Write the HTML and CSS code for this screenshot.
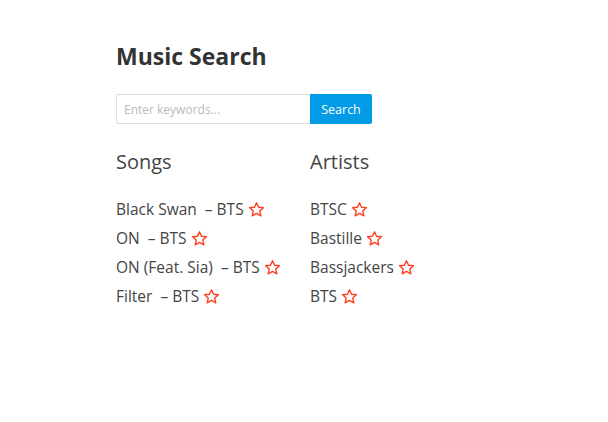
FILE: index.html
```html
<!DOCTYPE html>
<html>
<head>
<meta charset="utf-8">
<link rel="stylesheet" href="styles.css">
</head>
<body>
<main class="page">
  <h1 class="title">Music Search</h1>
  <form class="search">
    <input class="search-input" type="text" placeholder="Enter keywords...">
    <button class="search-btn" type="button">Search</button>
  </form>
  <div class="results">
    <section class="col">
      <h2 class="col-title">Songs</h2>
      <ul class="list">
        <li>Black Swan &nbsp;– BTS <svg class="star" viewBox="0 0 24 24"><path d="M12 2.5l2.9 6.3 6.9.7-5.2 4.6 1.5 6.8L12 17.4l-6.1 3.5 1.5-6.8-5.2-4.6 6.9-.7z"/></svg></li>
        <li>ON &nbsp;– BTS <svg class="star" viewBox="0 0 24 24"><path d="M12 2.5l2.9 6.3 6.9.7-5.2 4.6 1.5 6.8L12 17.4l-6.1 3.5 1.5-6.8-5.2-4.6 6.9-.7z"/></svg></li>
        <li>ON (Feat. Sia) &nbsp;– BTS <svg class="star" viewBox="0 0 24 24"><path d="M12 2.5l2.9 6.3 6.9.7-5.2 4.6 1.5 6.8L12 17.4l-6.1 3.5 1.5-6.8-5.2-4.6 6.9-.7z"/></svg></li>
        <li>Filter &nbsp;– BTS <svg class="star" viewBox="0 0 24 24"><path d="M12 2.5l2.9 6.3 6.9.7-5.2 4.6 1.5 6.8L12 17.4l-6.1 3.5 1.5-6.8-5.2-4.6 6.9-.7z"/></svg></li>
      </ul>
    </section>
    <section class="col">
      <h2 class="col-title">Artists</h2>
      <ul class="list">
        <li>BTSC <svg class="star" viewBox="0 0 24 24"><path d="M12 2.5l2.9 6.3 6.9.7-5.2 4.6 1.5 6.8L12 17.4l-6.1 3.5 1.5-6.8-5.2-4.6 6.9-.7z"/></svg></li>
        <li>Bastille <svg class="star" viewBox="0 0 24 24"><path d="M12 2.5l2.9 6.3 6.9.7-5.2 4.6 1.5 6.8L12 17.4l-6.1 3.5 1.5-6.8-5.2-4.6 6.9-.7z"/></svg></li>
        <li>Bassjackers <svg class="star" viewBox="0 0 24 24"><path d="M12 2.5l2.9 6.3 6.9.7-5.2 4.6 1.5 6.8L12 17.4l-6.1 3.5 1.5-6.8-5.2-4.6 6.9-.7z"/></svg></li>
        <li>BTS <svg class="star" viewBox="0 0 24 24"><path d="M12 2.5l2.9 6.3 6.9.7-5.2 4.6 1.5 6.8L12 17.4l-6.1 3.5 1.5-6.8-5.2-4.6 6.9-.7z"/></svg></li>
      </ul>
    </section>
  </div>
</main>
</body>
</html>
```

FILE: styles.css
```css
* { box-sizing: border-box; }
html, body { margin: 0; background: #fff; }
body {
  font-family: "Open Sans", "Noto Sans", sans-serif;
  color: #444;
}
.page {
  padding: 40px 0 0 116px;
}
.title {
  margin: 0;
  font-size: 23px;
  line-height: 32px;
  font-weight: 700;
  color: #333;
}
.search {
  display: flex;
  margin-top: 22px;
}
.search-input {
  width: 194px;
  height: 30px;
  border: 1px solid #ddd;
  border-right: none;
  border-radius: 2px 0 0 2px;
  padding: 0 7px;
  font-family: inherit;
  font-size: 12px;
  color: #444;
  outline: none;
}
.search-input::placeholder { color: #bbb; }
.search-btn {
  width: 62px;
  height: 30px;
  border: none;
  border-radius: 0 2px 2px 0;
  background: #039be5;
  color: #fff;
  font-family: inherit;
  font-size: 12.5px;
  padding: 0;
}
.results {
  display: flex;
  margin-top: 24px;
}
.col { width: 194px; }
.col-title {
  margin: 0 0 19px;
  font-size: 20px;
  line-height: 28px;
  font-weight: 400;
  color: #444;
}
.list {
  list-style: none;
  margin: 0;
  padding: 0;
}
.list li {
  font-size: 15.5px;
  line-height: 29px;
  height: 29px;
  display: flex;
  align-items: center;
  white-space: pre;
}
.star {
  width: 17px;
  height: 17px;
  fill: none;
  stroke: #ff3d1f;
  stroke-width: 1.9;
  stroke-linejoin: round;
}
```
